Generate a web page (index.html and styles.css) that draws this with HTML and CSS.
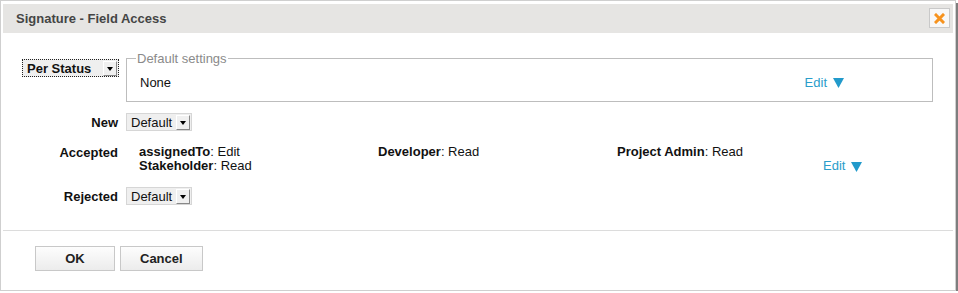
FILE: index.html
```html
<!DOCTYPE html>
<html lang="en">
<head>
    <meta charset="UTF-8">
    <title>Signature - Field Access</title>
    <link rel="stylesheet" href="styles.css">
</head>
<body>
    <div class="dialog">
        <div class="titlebar">
            <span class="title">Signature - Field Access</span>
            <span class="close">
                <svg width="11" height="11" viewBox="0 0 11 11"><path d="M2 2 L9 9 M9 2 L2 9" stroke="#f7931e" stroke-width="3" stroke-linecap="square"/></svg>
            </span>
        </div>

        <div class="form">
            <div class="label top">
                <span class="select bold focused">Per Status<span class="arrow"></span></span>
            </div>
            <fieldset class="defaults">
                <legend>Default settings</legend>
                <div class="defaults-row">
                    <span class="value">None</span>
                    <a class="edit edit-default">Edit <svg width="11" height="10" viewBox="0 0 11 10"><path d="M0 0 H11 L5.5 10 Z" fill="#229acb"/></svg></a>
                </div>
            </fieldset>

            <div class="label">New</div>
            <div class="cell">
                <span class="select">Default<span class="arrow"></span></span>
            </div>

            <div class="label top">Accepted</div>
            <div class="cell perms-row">
                <div class="perms">
                    <div><b>assignedTo</b>: Edit</div>
                    <div><b>Developer</b>: Read</div>
                    <div><b>Project Admin</b>: Read</div>
                    <div><b>Stakeholder</b>: Read</div>
                </div>
                <a class="edit edit-status">Edit <svg width="11" height="10" viewBox="0 0 11 10"><path d="M0 0 H11 L5.5 10 Z" fill="#229acb"/></svg></a>
            </div>

            <div class="label">Rejected</div>
            <div class="cell">
                <span class="select">Default<span class="arrow"></span></span>
            </div>
        </div>

        <div class="buttons">
            <button class="ok">OK</button>
            <button>Cancel</button>
        </div>
    </div>
</body>
</html>
```

FILE: styles.css
```css
body {
    margin: 0;
    font-family: "Liberation Sans", Arial, sans-serif;
    font-size: 13px;
    color: #111;
    background: #fff;
}

.dialog {
    width: 954px;
    height: 289px;
    border: 1px solid #cfcfcf;
    box-shadow: 3px 3px 0 #7e7e7e;
    background: #fff;
}

.titlebar {
    margin: 3px 2px 0 2px;
    height: 29px;
    background: #e6e5e3;
    display: flex;
    align-items: center;
    justify-content: space-between;
    padding: 0 3px 0 13px;
}

.title {
    font-weight: bold;
    color: #454545;
    font-size: 13px;
}

.close {
    width: 19px;
    height: 18px;
    border: 1px solid #c9c9c9;
    background: #f8f8f8;
    display: flex;
    align-items: center;
    justify-content: center;
    margin-top: -1px;
}

.form {
    display: grid;
    grid-template-columns: 96px 807px;
    column-gap: 8px;
    row-gap: 14px;
    align-items: center;
    margin: 18px 0 0 21px;
}

.label {
    text-align: right;
    font-weight: bold;
}

.label.top {
    align-self: start;
}

.label.top .select {
    margin-top: 8px;
}

.cell {
    display: flex;
    align-items: center;
}

.select {
    display: inline-flex;
    align-items: center;
    justify-content: space-between;
    box-sizing: border-box;
    height: 18px;
    padding: 0 1px 0 4px;
    background: #efefef;
    border: 1px solid #d6d6d6;
    font-size: 13px;
    font-weight: normal;
    color: #111;
    width: 66px;
    text-align: left;
}

.select.bold {
    font-weight: bold;
    width: 97px;
    margin-right: -1px;
}

.select.focused {
    border: 1px dotted #222;
}

.arrow {
    width: 14px;
    height: 15px;
    box-sizing: border-box;
    background: #f0f0f0;
    border-top: 1px solid #fff;
    border-left: 1px solid #fff;
    border-right: 1px solid #888;
    border-bottom: 1px solid #888;
    position: relative;
}

.arrow::after {
    content: "";
    position: absolute;
    left: 3px;
    top: 5px;
    border-left: 3px solid transparent;
    border-right: 3px solid transparent;
    border-top: 4px solid #000;
}

.defaults {
    margin: 0 0 -3px 0;
    padding: 0 9px 0 9px;
    border: 1px solid #bdbdbd;
    min-width: 0;
}

.defaults legend {
    color: #8a8a8a;
    padding: 0 1px;
    font-size: 13px;
}

.defaults-row {
    display: flex;
    justify-content: space-between;
    align-items: center;
    padding: 9px 79px 11px 4px;
}

.edit {
    color: #2a9dca;
    display: inline-flex;
    align-items: center;
    gap: 6px;
    cursor: pointer;
}

.edit svg {
    margin-top: 1px;
}

.perms-row {
    justify-content: space-between;
    align-items: flex-end;
    padding: 0 71px 0 13px;
    line-height: 14px;
}

.perms {
    display: grid;
    grid-template-columns: 239px 239px 206px;
}

.perms b {
    font-weight: bold;
}

.buttons {
    border-top: 1px solid #dcdcdc;
    margin: 25px 2px 0 2px;
    padding: 15px 0 0 32px;
    display: flex;
    gap: 5px;
}

button {
    font-family: "Liberation Sans", Arial, sans-serif;
    font-size: 13px;
    font-weight: bold;
    color: #222;
    height: 25px;
    min-width: 80px;
    padding: 0 19px;
    background: linear-gradient(#fdfdfd, #ececec);
    border: 1px solid #c8c8c8;
    border-radius: 0;
}

button.ok {
    width: 80px;
}
```
